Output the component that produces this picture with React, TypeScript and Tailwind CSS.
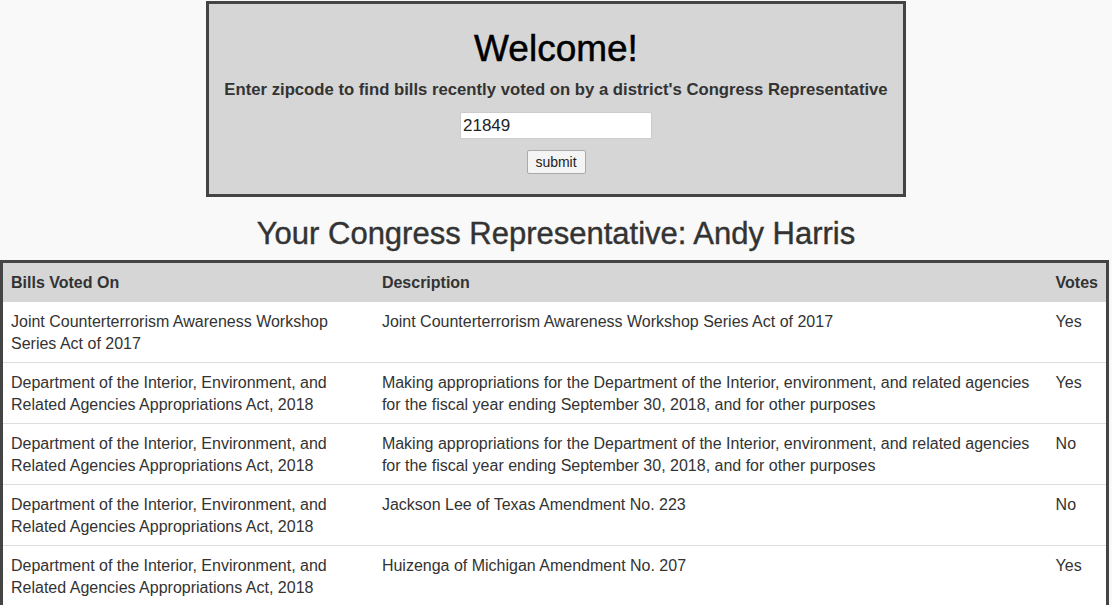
import React from "react";

const rows: { bill: string; desc: string; vote: string }[] = [
  {
    bill: "Joint Counterterrorism Awareness Workshop Series Act of 2017",
    desc: "Joint Counterterrorism Awareness Workshop Series Act of 2017",
    vote: "Yes",
  },
  {
    bill: "Department of the Interior, Environment, and Related Agencies Appropriations Act, 2018",
    desc: "Making appropriations for the Department of the Interior, environment, and related agencies for the fiscal year ending September 30, 2018, and for other purposes",
    vote: "Yes",
  },
  {
    bill: "Department of the Interior, Environment, and Related Agencies Appropriations Act, 2018",
    desc: "Making appropriations for the Department of the Interior, environment, and related agencies for the fiscal year ending September 30, 2018, and for other purposes",
    vote: "No",
  },
  {
    bill: "Department of the Interior, Environment, and Related Agencies Appropriations Act, 2018",
    desc: "Jackson Lee of Texas Amendment No. 223",
    vote: "No",
  },
  {
    bill: "Department of the Interior, Environment, and Related Agencies Appropriations Act, 2018",
    desc: "Huizenga of Michigan Amendment No. 207",
    vote: "Yes",
  },
];

export default function App() {
  return (
    <div
      className="min-h-screen bg-[#f9f9f9] text-[#333] pt-px"
      style={{ fontFamily: '"Liberation Sans", Arial, sans-serif' }}
    >
      <div className="mx-auto w-[700px] border-[3px] border-[#444] bg-[#d6d6d6] pt-[25px] pb-[20px] text-center">
        <h1 className="text-[37px] leading-[40px] text-black [-webkit-text-stroke:0.5px_black]">Welcome!</h1>
        <p className="mt-[10px] text-[16.7px] font-bold leading-[22px] text-[#333]">
          Enter zipcode to find bills recently voted on by a district's Congress Representative
        </p>
        <div className="mt-[11px] flex justify-center">
          <input
            defaultValue="21849"
            className="h-[27px] w-[192px] border border-[#ccc] bg-white px-[2px] text-[17px] text-[#222] outline-none"
          />
        </div>
        <div className="mt-[11px] flex justify-center">
          <button className="h-[24px] w-[59px] rounded-[2px] border border-[#aaa] bg-[#f4f4f4] text-[14px] text-[#222]">
            submit
          </button>
        </div>
      </div>

      <h2 className="mt-[20px] mb-[10px] text-center text-[31px] leading-[33px] text-[#333] [-webkit-text-stroke:0.4px_#333]">
        Your Congress Representative: Andy Harris
      </h2>

      <div className="w-[1109px] border-[3px] border-[#444] bg-white">
        <table className="w-full border-collapse text-left text-[16px] leading-[22px] text-[#333]">
          <thead>
            <tr className="bg-[#d6d6d6]">
              <th className="w-[371px] px-2 pt-[9px] pb-[8px] align-top font-bold">Bills Voted On</th>
              <th className="w-[674px] px-2 pt-[9px] pb-[8px] align-top font-bold">Description</th>
              <th className="px-2 pt-[9px] pb-[8px] align-top font-bold">Votes</th>
            </tr>
          </thead>
          <tbody>
            {rows.map((r, i) => (
              <tr key={i} className={i === 0 ? "" : "border-t border-[#ddd]"}>
                <td className="px-2 pt-[9px] pb-[7px] align-top">{r.bill}</td>
                <td className="px-2 pt-[9px] pb-[7px] align-top">{r.desc}</td>
                <td className="px-2 pt-[9px] pb-[7px] align-top">{r.vote}</td>
              </tr>
            ))}
          </tbody>
        </table>
      </div>
    </div>
  );
}
